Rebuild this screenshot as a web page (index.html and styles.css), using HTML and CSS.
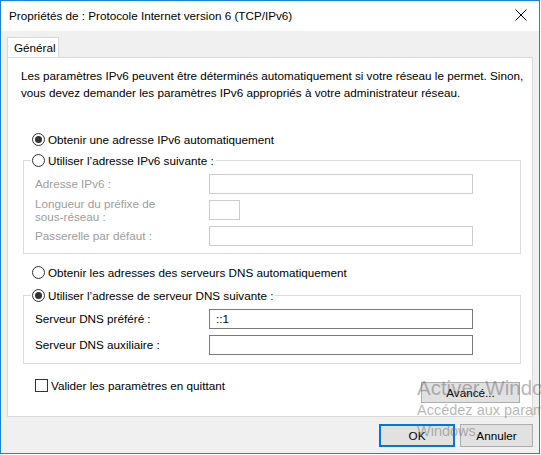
FILE: index.html
```html
<!DOCTYPE html>
<html lang="fr">
<head>
  <meta charset="UTF-8">
  <title>Propriétés de : Protocole Internet version 6 (TCP/IPv6)</title>
  <link rel="stylesheet" href="styles.css">
</head>
<body>
  <div class="window">
    <div class="titlebar">
      <span class="title">Propriétés de : Protocole Internet version 6 (TCP/IPv6)</span>
      <span class="close">
        <svg width="12" height="12" viewBox="0 0 12 12"><path d="M0.5 0.5 L11.5 11.5 M11.5 0.5 L0.5 11.5" stroke="#000" stroke-width="1" fill="none"/></svg>
      </span>
    </div>

    <div class="content">
      <div class="tabs">
        <div class="tab">Général</div>
      </div>

      <div class="panel">
        <p class="intro">Les paramètres IPv6 peuvent être déterminés automatiquement si votre réseau le permet. Sinon,<br>vous devez demander les paramètres IPv6 appropriés à votre administrateur réseau.</p>

        <div class="option first">
          <span class="radio checked"></span>
          <span>Obtenir une adresse IPv6 automatiquement</span>
        </div>

        <fieldset class="group group-ip">
          <legend class="option">
            <span class="radio"></span>
            <span>Utiliser l’adresse IPv6 suivante :</span>
          </legend>
          <div class="fields disabled">
            <span class="label">Adresse IPv6 :</span>
            <span class="input"></span>
            <span class="label two-lines">Longueur du préfixe de<br>sous-réseau :</span>
            <span class="input small"></span>
            <span class="label">Passerelle par défaut :</span>
            <span class="input"></span>
          </div>
        </fieldset>

        <div class="option dns-auto">
          <span class="radio"></span>
          <span>Obtenir les adresses des serveurs DNS automatiquement</span>
        </div>

        <fieldset class="group group-dns">
          <legend class="option">
            <span class="radio checked"></span>
            <span>Utiliser l’adresse de serveur DNS suivante :</span>
          </legend>
          <div class="fields">
            <span class="label">Serveur DNS préféré :</span>
            <span class="input">::1</span>
            <span class="label">Serveur DNS auxiliaire :</span>
            <span class="input"></span>
          </div>
        </fieldset>

        <div class="panel-foot">
          <div class="check-row">
            <span class="checkbox"></span>
            <span>Valider les paramètres en quittant</span>
          </div>
          <button class="btn advanced">Avancé...</button>
        </div>
      </div>

      <div class="actions">
        <button class="btn default ok">OK</button>
        <button class="btn cancel">Annuler</button>
      </div>
    </div>
  </div>

  <div class="watermark">
    <div class="wm-big">Activer Windows</div>
    <div class="wm-small">Accédez aux paramètres pour activer</div>
    <div class="wm-small">Windows.</div>
  </div>
</body>
</html>
```

FILE: styles.css
```css
html, body {
  margin: 0;
  padding: 0;
  background: #ffffff;
  overflow: hidden;
}
body {
  width: 541px;
  height: 455px;
  position: relative;
  font-family: "Liberation Sans", Arial, sans-serif;
  font-size: 11.7px;
  color: #000;
}

/* window frame */
.window {
  width: 540px;
  height: 454px;
  box-sizing: border-box;
  border: 1px solid #1883d7;
  display: flex;
  flex-direction: column;
  background: #f0f0f0;
}
.titlebar {
  height: 30px;
  background: #fff;
  display: flex;
  align-items: center;
  justify-content: space-between;
  padding: 0 8px 0 8px;
  flex-shrink: 0;
}
.title {
  margin-top: -1px;
}
.close {
  display: flex;
  margin-right: 4px;
  margin-top: -2px;
}

.content {
  padding: 6px 6px 0 6px;
  flex: 1;
  display: flex;
  flex-direction: column;
}

/* tab strip */
.tabs {
  display: flex;
  height: 20px;
}
.tab {
  position: relative;
  z-index: 1;
  width: 52px;
  height: 20px;
  box-sizing: border-box;
  background: #fff;
  border: 1px solid #d9d9d9;
  border-bottom: none;
  padding-left: 6px;
  line-height: 19px;
  margin-bottom: -1px;
}

.panel {
  background: #fff;
  border: 1px solid #d9d9d9;
  padding: 9px 11px 13px 15px;
  height: 360px;
  box-sizing: border-box;
}
.intro {
  margin: 0 -8px 0 -2px;
  line-height: 17px;
  white-space: nowrap;
}

/* radio / check rows */
.option {
  display: flex;
  align-items: center;
  height: 16px;
  gap: 3px;
}
.option.first {
  margin: 30px 0 0 9px;
}
.option.dns-auto {
  margin: 10px 0 0 9px;
}
.radio {
  width: 13px;
  height: 13px;
  box-sizing: border-box;
  border: 1px solid #333;
  border-radius: 50%;
  background: #fff;
  display: flex;
  align-items: center;
  justify-content: center;
}
.radio.checked::after {
  content: "";
  width: 7px;
  height: 7px;
  border-radius: 50%;
  background: #333;
}

/* group boxes */
.group {
  margin: 0;
  padding: 0 0 7px 11px;
  border: 1px solid #dcdcdc;
  min-width: 0;
}
.group legend {
  margin-left: -4px;
  padding: 0 2px 0 1px;
}
.group-ip {
  margin-top: 5px;
}
.group-dns {
  margin-top: 7px;
  padding-bottom: 8px;
}
.fields {
  display: grid;
  grid-template-columns: 174px 264px;
  align-items: center;
  margin-top: 6px;
}
.group-ip .fields {
  row-gap: 3px;
}
.group-dns .fields {
  row-gap: 6px;
}
.label {
  line-height: 16px;
}
.label.two-lines {
  line-height: 13px;
}
.input {
  height: 20px;
  box-sizing: border-box;
  border: 1px solid #7a7a7a;
  background: #fff;
  padding: 0 6px;
  line-height: 18px;
}
.input.small {
  width: 31px;
}
.disabled .label {
  color: #9d9d9d;
}
.disabled .input {
  border-color: #cccccc;
}

.panel-foot {
  display: flex;
  justify-content: space-between;
  align-items: flex-start;
  margin-top: 13px;
}
.check-row {
  display: flex;
  align-items: center;
  gap: 3px;
  height: 16px;
  margin-left: 12px;
}
.checkbox {
  width: 13px;
  height: 13px;
  box-sizing: border-box;
  border: 1px solid #333;
  background: #fff;
}

/* push buttons */
.btn {
  font-family: inherit;
  font-size: 11.7px;
  color: #000;
  background: #e1e1e1;
  border: 1px solid #adadad;
  padding: 0;
  margin: 0;
}
.advanced {
  width: 99px;
  height: 21px;
  margin: 5px 1px 0 0;
}
.actions {
  display: flex;
  justify-content: flex-end;
  gap: 5px;
  margin-top: 7px;
}
.ok {
  width: 76px;
  height: 23px;
}
.cancel {
  width: 73px;
  height: 23px;
}
.btn.default {
  border: 2px solid #0078d7;
}

/* activation notice drawn above everything */
.watermark {
  position: absolute;
  left: 417px;
  top: 375px;
  white-space: nowrap;
  color: rgba(110, 110, 110, 0.5);
  pointer-events: none;
}
.wm-big {
  font-size: 20.5px;
  line-height: 25px;
}
.wm-small {
  font-size: 14.5px;
  line-height: 21px;
}
```
